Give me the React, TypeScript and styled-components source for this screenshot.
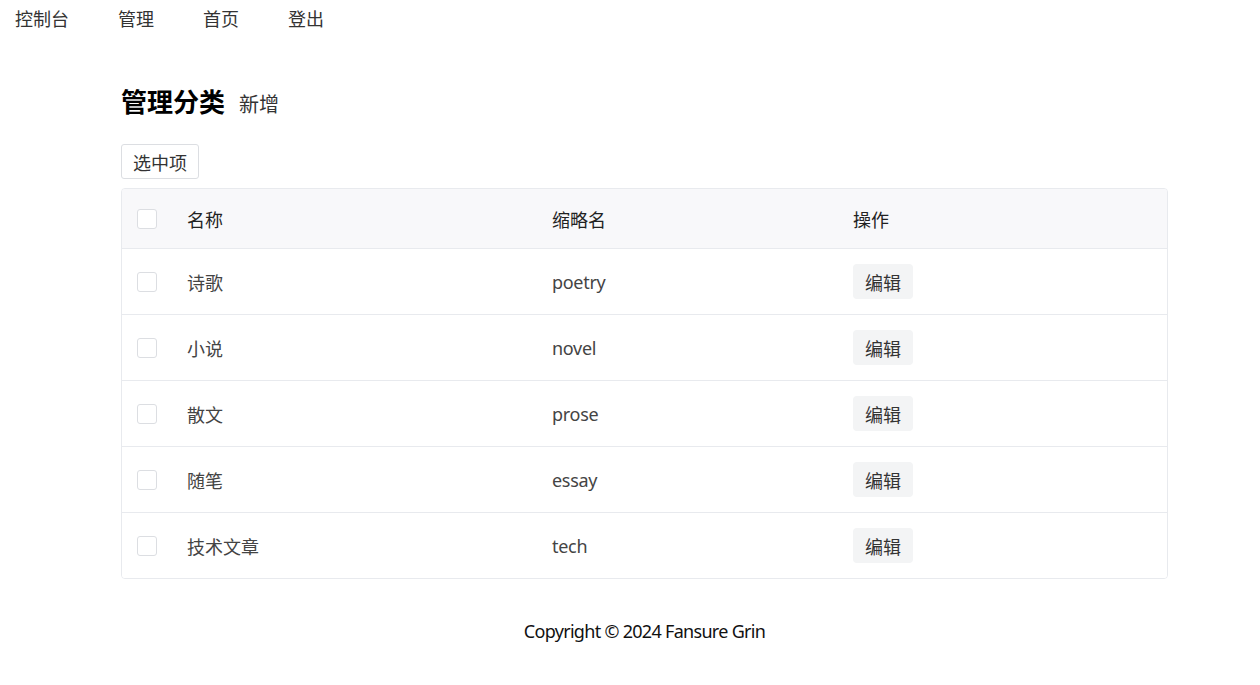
import React from "react"
import styled, { createGlobalStyle } from "styled-components"

const GlobalStyle = createGlobalStyle`
  html, body {
    margin: 0;
    padding: 0;
    background: #fff;
    font-family: "Noto Sans", "Noto Sans CJK SC", sans-serif;
    color: #333;
  }
`

const Nav = styled.nav`
  display: flex;
  align-items: center;
  height: 38px;
  padding-left: 15px;
  gap: 49px;
  font-size: 18px;
  color: #333;
`

const NavItem = styled.a`
  cursor: pointer;
  line-height: 38px;
`

const Main = styled.main`
  width: 1047px;
  margin-left: 121px;
  padding-top: 44px;
`

const Header = styled.div`
  display: flex;
  align-items: baseline;
  gap: 14px;
  height: 38px;
`

const Title = styled.h2`
  margin: 0;
  font-size: 26px;
  font-weight: 700;
  color: #000;
`

const AddLink = styled.a`
  font-size: 20px;
  color: #333;
  cursor: pointer;
`

const Toolbar = styled.div`
  margin-top: 24px;
  margin-bottom: 9px;
`

const Button = styled.button`
  display: block;
  height: 35px;
  padding: 0 11px;
  font: inherit;
  font-size: 18px;
  color: #333;
  background: #fff;
  border: 1px solid #dcdee2;
  border-radius: 3px;
  cursor: pointer;
`

const Table = styled.div`
  border: 1px solid #e8eaee;
  border-radius: 4px;
  overflow: hidden;
`

const Row = styled.div<{ $head?: boolean }>`
  display: grid;
  grid-template-columns: 65px 365px 301px 1fr;
  align-items: center;
  height: ${p => (p.$head ? 59 : 65)}px;
  background: ${p => (p.$head ? "#f8f8fa" : "#fff")};
  color: ${p => (p.$head ? "#222" : "#444")};
  font-size: 18px;
  & + & {
    border-top: 1px solid #e8eaee;
  }
`

const Cell = styled.span`
  letter-spacing: -0.3px;
`

const Check = styled.span`
  display: block;
  width: 18px;
  height: 18px;
  margin-left: 15px;
  border: 1px solid #dcdee2;
  border-radius: 3px;
  background: #fff;
`

const EditButton = styled.button`
  width: 60px;
  height: 35px;
  padding: 0;
  font: inherit;
  font-size: 18px;
  color: #333;
  background: #f3f4f5;
  border: none;
  border-radius: 4px;
  cursor: pointer;
`

const Footer = styled.footer`
  margin-top: 40px;
  text-align: center;
  font-size: 18px;
  letter-spacing: -0.7px;
  color: #111;
`

const rows = [
  { name: "诗歌", abbr: "poetry" },
  { name: "小说", abbr: "novel" },
  { name: "散文", abbr: "prose" },
  { name: "随笔", abbr: "essay" },
  { name: "技术文章", abbr: "tech" },
]

export default function App() {
  return (
    <>
      <GlobalStyle />
      <Nav>
        <NavItem>控制台</NavItem>
        <NavItem>管理</NavItem>
        <NavItem>首页</NavItem>
        <NavItem>登出</NavItem>
      </Nav>
      <Main>
        <Header>
          <Title>管理分类</Title>
          <AddLink>新增</AddLink>
        </Header>
        <Toolbar>
          <Button>选中项</Button>
        </Toolbar>
        <Table>
          <Row $head>
            <Check />
            <span>名称</span>
            <span>缩略名</span>
            <span>操作</span>
          </Row>
          {rows.map(r => (
            <Row key={r.abbr}>
              <Check />
              <span>{r.name}</span>
              <Cell>{r.abbr}</Cell>
              <span>
                <EditButton>编辑</EditButton>
              </span>
            </Row>
          ))}
        </Table>
        <Footer>Copyright © 2024 Fansure Grin</Footer>
      </Main>
    </>
  )
}
